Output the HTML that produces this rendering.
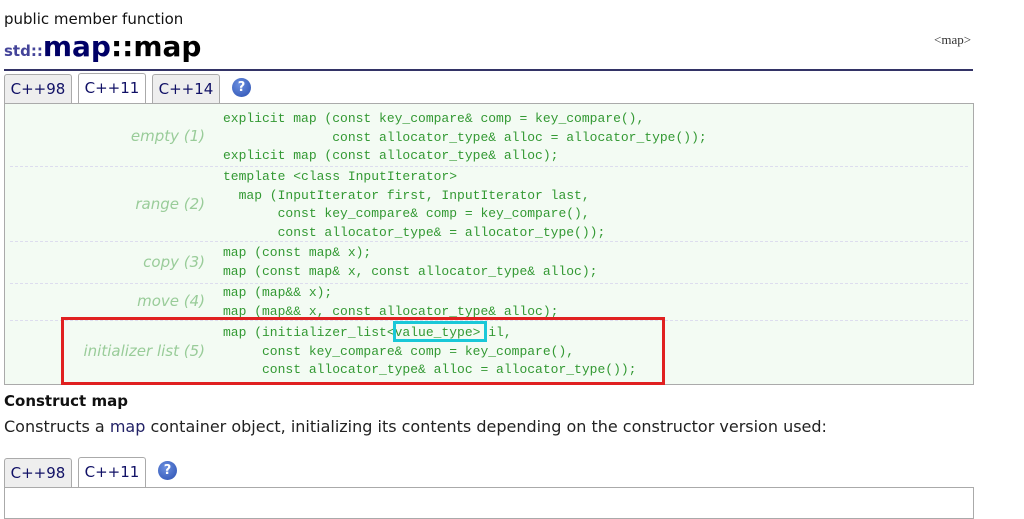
<!DOCTYPE html>
<html><head><style>
body{margin:0;background:#fff;width:1024px;height:506px;overflow:hidden;position:relative;font-family:"DejaVu Sans",Verdana,sans-serif}
.a{position:absolute}
.tab{position:absolute;height:28px;border:1px solid #aaa;border-bottom:none;background:#eee;border-radius:3px 3px 0 0;font-size:15px;color:#116;line-height:28px;text-align:center}
.tab.s{background:#fff;height:30px}
.q{position:absolute;width:19px;height:19px;border-radius:50%;background:radial-gradient(circle at 40% 35%,#6b8fe0,#2a4fb0);color:#fff;font:bold 13px/19px "DejaVu Sans",sans-serif;text-align:center}
.box{position:absolute;left:4px;top:103px;width:968px;height:280px;border:1px solid #aaa;background:#f3fbf3}
.lbl{position:absolute;right:819px;font-style:italic;color:#9c9;font-size:15px;text-align:right;white-space:nowrap}
pre{position:absolute;left:223px;margin:0;font:13px/18.5px "Liberation Mono",monospace;color:#393;white-space:pre}
.sep{position:absolute;left:10px;width:958px;border-top:1px dashed #dde;}
</style></head><body>
<div class="a" style="left:4px;top:10px;font-size:15px;color:#111">public member function</div>
<div class="a" style="left:4px;top:30px;font-weight:bold;white-space:nowrap"><span style="font-size:15px;color:#449">std::</span><span style="font-size:28px;color:#006">map</span><span style="font-size:28px;color:#000">::map</span></div>
<div class="a" style="left:934px;top:32px;font:13px 'Liberation Serif',serif;color:#333">&lt;map&gt;</div>
<div class="a" style="left:4px;top:69px;width:969px;height:2px;background:#336"></div>
<div class="tab" style="left:4px;top:74px;width:66px">C++98</div>
<div class="tab s" style="left:78px;top:73px;width:66px">C++11</div>
<div class="tab" style="left:152px;top:74px;width:66px">C++14</div>
<div class="q" style="left:232px;top:78px">?</div>
<div class="box"></div>
<div class="sep" style="top:166px"></div><div class="sep" style="top:241px"></div><div class="sep" style="top:283px"></div><div class="sep" style="top:320px"></div>
<div class="lbl" style="top:127px">empty (1)</div>
<div class="lbl" style="top:195px">range (2)</div>
<div class="lbl" style="top:253px">copy (3)</div>
<div class="lbl" style="top:292px">move (4)</div>
<div class="lbl" style="top:342px">initializer list (5)</div>
<pre style="top:110px">explicit map (const key_compare&amp; comp = key_compare(),
              const allocator_type&amp; alloc = allocator_type());
explicit map (const allocator_type&amp; alloc);</pre>
<pre style="top:168px">template &lt;class InputIterator&gt;
  map (InputIterator first, InputIterator last,
       const key_compare&amp; comp = key_compare(),
       const allocator_type&amp; = allocator_type());</pre>
<pre style="top:244px">map (const map&amp; x);
map (const map&amp; x, const allocator_type&amp; alloc);</pre>
<pre style="top:284px">map (map&amp;&amp; x);
map (map&amp;&amp; x, const allocator_type&amp; alloc);</pre>
<pre style="top:324px">map (initializer_list&lt;value_type&gt; il,
     const key_compare&amp; comp = key_compare(),
     const allocator_type&amp; alloc = allocator_type());</pre>
<div class="a" style="left:61px;top:317px;width:598px;height:62px;border:3px solid #e02020"></div>
<div class="a" style="left:393px;top:321px;width:94px;height:21px;border:3px solid #1ac8d8;box-sizing:border-box"></div>
<div class="a" style="left:4px;top:392px;font-size:15px;font-weight:bold;color:#111">Construct map</div>
<div class="a" style="left:4px;top:417px;font-size:16px;color:#222;white-space:nowrap">Constructs a <span style="color:#226">map</span> container object, initializing its contents depending on the constructor version used:</div>
<div class="tab" style="left:4px;top:458px;width:66px">C++98</div>
<div class="tab s" style="left:78px;top:457px;width:66px">C++11</div>
<div class="q" style="left:158px;top:461px">?</div>
<div class="a" style="left:4px;top:487px;width:968px;height:30px;border:1px solid #aaa"></div>
</body></html>
